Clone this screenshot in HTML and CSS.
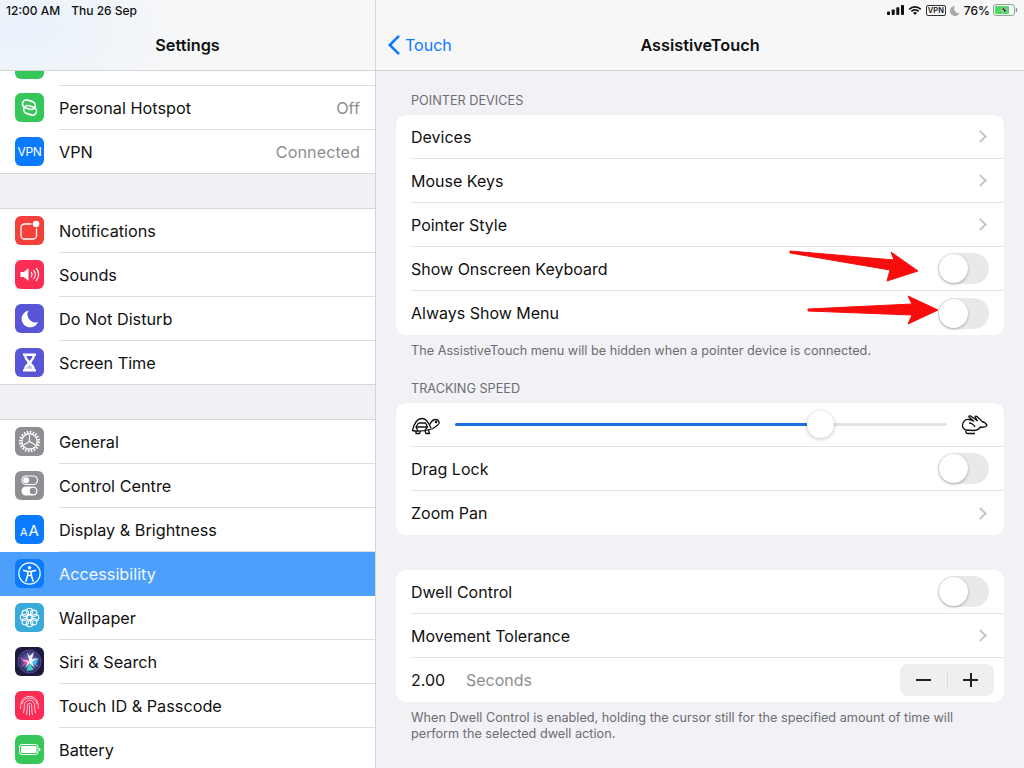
FILE: index.html
```html
<!DOCTYPE html>
<html lang="en">
<head>
    <meta charset="UTF-8">
    <meta name="viewport" content="width=device-width, initial-scale=1.0">
    <title>AssistiveTouch</title>
    <link rel="stylesheet" href="styles.css">
</head>
<body>
    <div class="sidebar">
        <div class="header header-left">
            <div class="status"><span>12:00 AM</span><span class="status-date">Thu 26 Sep</span></div>
            <div class="nav"><span class="nav-title">Settings</span></div>
        </div>
        <div class="group group-cut">
            <div class="row row-cut">
                <span class="icon green icon-cut"></span>
            </div>
            <div class="row">
                <span class="icon green">
                    <svg viewBox="0 0 29 29" fill="none" stroke="#fff" stroke-width="1.700"><rect x="6.500" y="8" width="13" height="8" rx="4" transform="rotate(18 14.500 14.500)"/><rect x="9.500" y="13" width="13" height="8" rx="4" transform="rotate(18 14.500 14.500)"/></svg>
                </span>
                <span class="row-text">Personal Hotspot</span><span class="row-value">Off</span>
            </div>
            <div class="row row-last">
                <span class="icon blue icon-vpn">VPN</span>
                <span class="row-text">VPN</span><span class="row-value">Connected</span>
            </div>
        </div>
        <div class="group group-gap">
            <div class="row">
                <span class="icon red">
                    <svg viewBox="0 0 29 29" fill="none"><rect x="6" y="8" width="15.500" height="15" rx="3.500" stroke="#fff" stroke-width="1.300"/><circle cx="21" cy="8" r="4.600" fill="#f4403a"/><circle cx="21" cy="8" r="3.300" fill="#fff"/></svg>
                </span>
                <span class="row-text">Notifications</span>
            </div>
            <div class="row">
                <span class="icon pink">
                    <svg viewBox="0 0 29 29" fill="none" stroke="#fff"><path d="M5.500 12h3.200l4.800-3.800v12.600L8.700 17H5.500z" fill="#fff" stroke="none"/><path d="M16 12a3.500 3.500 0 0 1 0 5M18.500 10a6.500 6.500 0 0 1 0 9M21 8a9.500 9.500 0 0 1 0 13" stroke-width="1.100"/></svg>
                </span>
                <span class="row-text">Sounds</span>
            </div>
            <div class="row">
                <span class="icon indigo">
                    <svg viewBox="0 0 29 29"><path d="M13.500 6.500a8.500 8.500 0 1 0 9.500 11.500 8 8 0 0 1-9.500-11.500z" fill="#fff"/></svg>
                </span>
                <span class="row-text">Do Not Disturb</span>
            </div>
            <div class="row row-last">
                <span class="icon indigo">
                    <svg viewBox="0 0 29 29" fill="#fff"><path d="M8 5.500h13v2.200h-1.200c0 4-3 5-3.300 6.800.3 1.800 3.300 2.800 3.300 6.800H21v2.200H8v-2.200h1.200c0-4 3-5 3.300-6.800-.3-1.800-3.300-2.800-3.300-6.800H8z"/><path d="M11.500 8h6c0 2.300-2.200 3.600-3 5-.8-1.400-3-2.700-3-5z" fill="#5856d6"/><path d="M14.500 16.500c.8 1.400 3 2.200 3 4.300h-6c0-2.100 2.200-2.900 3-4.300z" fill="#5856d6" opacity=".35"/></svg>
                </span>
                <span class="row-text">Screen Time</span>
            </div>
        </div>
        <div class="group group-gap">
            <div class="row">
                <span class="icon gray">
                    <svg viewBox="0 0 29 29" fill="none" stroke="#fff"><circle cx="14.500" cy="14.500" r="9.200" stroke-width="3" stroke-dasharray="1.500 1.390"/><circle cx="14.500" cy="14.500" r="7.600" stroke-width="1.200"/><path d="M14.500 14.500V8M14.500 14.500l5.600 3.300M14.500 14.500l-5.600 3.300" stroke-width="1.100"/></svg>
                </span>
                <span class="row-text">General</span>
            </div>
            <div class="row">
                <span class="icon gray">
                    <svg viewBox="0 0 29 29"><rect x="7" y="5" width="15.500" height="8.500" rx="4.250" fill="none" stroke="#fff" stroke-width="1.200"/><circle cx="11.200" cy="9.250" r="3" fill="#fff"/><rect x="6.500" y="15.500" width="16" height="9" rx="4.500" fill="#fff"/><circle cx="18" cy="20" r="3.200" fill="#8e8e93"/></svg>
                </span>
                <span class="row-text">Control Centre</span>
            </div>
            <div class="row">
                <span class="icon blue icon-aa"><small>A</small>A</span>
                <span class="row-text">Display &amp; Brightness</span>
            </div>
            <div class="row row-selected">
                <span class="icon blue">
                    <svg viewBox="0 0 29 29" fill="none" stroke="#fff"><circle cx="14.500" cy="14.500" r="10.700" stroke-width="1.200"/><circle cx="14.500" cy="8.800" r="1.700" fill="#fff" stroke="none"/><path d="M8.500 11.500l4.200 1v3.500l-1.700 6M20.500 11.500l-4.200 1v3.500l1.700 6M12.700 12.500h3.600M12.800 16.500h3.400" stroke-width="1.600" stroke-linecap="round"/></svg>
                </span>
                <span class="row-text">Accessibility</span>
            </div>
            <div class="row">
                <span class="icon teal">
                    <svg viewBox="0 0 29 29" fill="none" stroke="#fff" stroke-width="1.100"><circle cx="14.500" cy="14.500" r="2.600"/><circle cx="14.500" cy="8.500" r="3.200"/><circle cx="14.500" cy="20.500" r="3.200"/><circle cx="8.500" cy="14.500" r="3.200"/><circle cx="20.500" cy="14.500" r="3.200"/><circle cx="10.300" cy="10.300" r="3.200"/><circle cx="18.700" cy="10.300" r="3.200"/><circle cx="10.300" cy="18.700" r="3.200"/><circle cx="18.700" cy="18.700" r="3.200"/></svg>
                </span>
                <span class="row-text">Wallpaper</span>
            </div>
            <div class="row">
                <span class="icon siri">
                    <svg viewBox="0 0 29 29">
                        <defs>
                            <radialGradient id="siriGlow">
                                <stop offset="0" stop-color="#b06ac0"/>
                                <stop offset="0.700" stop-color="#3d4a8e"/>
                                <stop offset="1" stop-color="#23264f"/>
                            </radialGradient>
                        </defs>
                        <circle cx="14.500" cy="14.500" r="11.500" fill="url(#siriGlow)" stroke="#7a4fa6" stroke-width=".8"/>
                        <path d="M14.500 15L5 10l4 6-3 4z" fill="#e0479e"/>
                        <path d="M14.500 15L24 11l-3 6 3 3z" fill="#44b8e8"/>
                        <path d="M14.500 15l4 8-7 1z" fill="#3fd0c0"/>
                        <path d="M14.500 15L12 5l2.500 4L19 5l-2 7 6-1-6 4 3 6-5.500-5-4 5 2-6-6-2 6 .5z" fill="#fff" opacity=".9"/>
                    </svg>
                </span>
                <span class="row-text">Siri &amp; Search</span>
            </div>
            <div class="row">
                <span class="icon pink">
                    <svg viewBox="0 0 29 29" fill="none" stroke="#fff" stroke-width=".9" stroke-opacity=".85"><path d="M7 13a7.700 7.700 0 0 1 15 0M5.500 18c.2-1 .3-3 .3-4a8.700 8.700 0 0 1 17.400 0c0 1.500.1 3 .3 4"/><path d="M8.500 22c.5-2 .8-5 .8-7.500a5.200 5.200 0 0 1 10.400 0c0 3 .2 5 .8 7.500"/><path d="M11.500 24c.5-3 .8-6 .8-9.500a2.200 2.200 0 0 1 4.400 0c0 4 .2 7 .8 9.500"/><path d="M14.500 14v11"/></svg>
                </span>
                <span class="row-text">Touch ID &amp; Passcode</span>
            </div>
            <div class="row">
                <span class="icon green">
                    <svg viewBox="0 0 29 29"><rect x="4.500" y="9.500" width="18.500" height="10" rx="2.500" fill="none" stroke="#fff" stroke-width="1"/><rect x="6" y="11" width="15.500" height="7" rx="1.300" fill="#fff"/><rect x="24" y="13" width="1.300" height="3" rx=".6" fill="#fff"/></svg>
                </span>
                <span class="row-text">Battery</span>
            </div>
        </div>
    </div>

    <div class="detail">
        <div class="header">
            <div class="status status-right">
                <svg width="17" height="10" viewBox="0 0 17 10" fill="#111"><rect x="0" y="6.500" width="3" height="3.500" rx=".7"/><rect x="4.700" y="4.500" width="3" height="5.500" rx=".7"/><rect x="9.300" y="2.300" width="3" height="7.700" rx=".7"/><rect x="14" y="0" width="3" height="10" rx=".7"/></svg>
                <svg width="14" height="11" viewBox="0 0 16 12" fill="#111"><path d="M8 2.800a8 8 0 0 1 5.900 2.500l1.300-1.400A10 10 0 0 0 8 .8a10 10 0 0 0-7.200 3.100l1.300 1.400A8 8 0 0 1 8 2.800z"/><path d="M8 6.200a4.800 4.800 0 0 1 3.500 1.500l1.300-1.400A6.700 6.700 0 0 0 8 4.300a6.700 6.700 0 0 0-4.800 2l1.300 1.400A4.800 4.800 0 0 1 8 6.200z"/><path d="M8 7.700a3.200 3.200 0 0 0-2.300 1l2.300 2.500 2.300-2.500a3.200 3.200 0 0 0-2.300-1z"/></svg>
                <span class="vpn-badge">VPN</span>
                <svg width="10" height="11" viewBox="0 0 11 12"><path d="M5.500 1a5.500 5.500 0 1 0 5 7.800A5 5 0 0 1 5.500 1z" fill="#a9a9ad"/></svg>
                <span class="battery-pct">76%</span>
                <svg width="25" height="12" viewBox="0 0 25 12"><rect x=".5" y=".5" width="21" height="11" rx="2.500" fill="none" stroke="#8fa88f"/><rect x="2" y="2" width="14" height="8" rx="1.200" fill="#4cd964"/><path d="M12.500 1l-4.300 5.600h2.800L10 11l4.300-5.700h-2.800z" fill="#111" stroke="#fff" stroke-width=".6"/><rect x="22.800" y="4" width="1.400" height="4" rx=".7" fill="#8a8a8e"/></svg>
            </div>
            <div class="nav">
                <span class="back">
                    <svg width="14" height="22" viewBox="0 0 14 22" fill="none" stroke="#0a7aff" stroke-width="2.600"><path d="M12 1.800L2.800 11l9.200 9.200"/></svg>
                    Touch
                </span>
                <span class="nav-title">AssistiveTouch</span>
            </div>
        </div>

        <div class="content">
            <div class="section-label">POINTER DEVICES</div>
            <div class="card">
                <div class="card-row"><span class="card-text">Devices</span><span class="chevron"></span></div>
                <div class="card-row"><span class="card-text">Mouse Keys</span><span class="chevron"></span></div>
                <div class="card-row"><span class="card-text">Pointer Style</span><span class="chevron"></span></div>
                <div class="card-row"><span class="card-text">Show Onscreen Keyboard</span><span class="toggle"></span></div>
                <div class="card-row"><span class="card-text">Always Show Menu</span><span class="toggle"></span></div>
            </div>
            <div class="footnote">The AssistiveTouch menu will be hidden when a pointer device is connected.</div>

            <div class="section-label section-second">TRACKING SPEED</div>
            <div class="card">
                <div class="card-row slider-row">
                    <svg class="speed-icon" width="29" height="20" viewBox="0 0 29 20" fill="none" stroke="#111" stroke-width="1.300"><path d="M1.500 15.500C3 9 6 3.500 11 3.500c4 0 7 4.500 9 9.500"/><path d="M1 15.500c6 1 14 .5 21-2"/><path d="M19 9.500c1-2.500 2.500-5 5.500-5 2.500 0 4 2 3.500 4-1 2-4 3.500-6 5"/><path d="M5 16v2.500h3.500l1-2.500M14 16l1 2.500h3.500l-1-3.500"/><path d="M7.500 8h7l2 4-3 4M7.500 8L5 12l2 4M5 12h11.500"/><circle cx="25" cy="7" r=".7" fill="#111"/></svg>
                    <div class="slider-track">
                        <div class="slider-fill"></div>
                        <div class="slider-knob"></div>
                    </div>
                    <svg class="speed-icon" width="28" height="20" viewBox="0 0 28 20" fill="none" stroke="#111" stroke-width="1.300"><path d="M1.500 10C2 6 5 4 8 4.500c2 .2 3.500 1 5 2L8 2c-.5-1 1-1.500 2-.8L16.500 6 14 1.800c0-1 1.500-1 2.300 0L21 6.500c2 .5 4.500 2.500 5 4-1 1.500-4 2-6.500 1.500-1.500 2-3.500 3.500-6.500 3.500L5 15c-2.500-1-3.800-3-3.500-5z"/><path d="M5 15.500c-.5 1.500 0 3 2 3h7"/><path d="M8 8c2 0 5 1.500 6 4"/></svg>
                </div>
                <div class="card-row"><span class="card-text">Drag Lock</span><span class="toggle"></span></div>
                <div class="card-row"><span class="card-text">Zoom Pan</span><span class="chevron"></span></div>
            </div>

            <div class="card card-third">
                <div class="card-row"><span class="card-text">Dwell Control</span><span class="toggle"></span></div>
                <div class="card-row"><span class="card-text">Movement Tolerance</span><span class="chevron"></span></div>
                <div class="card-row">
                    <span class="dwell-value">2.00</span><span class="dwell-unit">Seconds</span>
                    <div class="stepper">
                        <span class="step step-minus"></span>
                        <span class="step step-plus"></span>
                    </div>
                </div>
            </div>
            <div class="footnote">When Dwell Control is enabled, holding the cursor still for the specified amount of time will<br>perform the selected dwell action.</div>
        </div>
    </div>

    <!-- red annotation arrows drawn on top of the screenshot -->
    <svg class="arrows" width="1024" height="768" viewBox="0 0 1024 768" fill="#f80d0d" stroke="#f80d0d" stroke-linejoin="round">
        <path d="M790 251l104 9-3-8 27 19-31 10 3-11-100-17z"/>
        <path d="M808 309l104-5-4-8 30 14-30 14 4-9-104-4z"/>
    </svg>
</body>
</html>
```

FILE: styles.css
```css
* {
    box-sizing: border-box;
}
body {
    font-family: 'Inter', 'Liberation Sans', sans-serif;
    margin: 0;
    width: 1024px;
    height: 768px;
    overflow: hidden;
    display: flex;
    background-color: #f1f1f6;
    color: #111;
}
.sidebar {
    width: 376px;
    height: 768px;
    flex-shrink: 0;
    overflow: hidden;
    background-color: #f0f0f5;
    border-right: 1px solid #d5d5d8;
}
.detail {
    flex: 1;
    height: 768px;
    overflow: hidden;
}
.header {
    height: 71px;
    background-color: #f7f7f8;
    border-bottom: 1px solid #d3d3d6;
}
.header-left {
    background: radial-gradient(ellipse 170px 90px at 20px 30px, #e8f2fb, #f7f7f8);
}
.status {
    height: 20px;
    padding-left: 6px;
    font-size: 12px;
    font-weight: 500;
    display: flex;
    align-items: center;
}
.status-date {
    margin-left: 11px;
}
.status-right {
    justify-content: flex-end;
    gap: 4px;
    padding: 0 6px 0 0;
}
.vpn-badge {
    width: 20px;
    font-size: 7.500px;
    font-weight: 600;
    text-align: center;
    border: 1px solid #333;
    border-radius: 2px;
    line-height: 9px;
}
.battery-pct {
    font-size: 12px;
    font-weight: 500;
    margin-right: -1px;
}
.nav {
    position: relative;
    height: 50px;
    display: flex;
    align-items: center;
    justify-content: center;
}
.nav-title {
    font-size: 16.300px;
    font-weight: 600;
}
.back {
    position: absolute;
    left: 11px;
    top: 14px;
    display: flex;
    align-items: center;
    gap: 4px;
    font-size: 16px;
    color: #0a7aff;
}
.group {
    background-color: #fff;
    border-bottom: 1px solid #d8d8dc;
}
.group-gap {
    margin-top: 34px;
    border-top: 1px solid #d8d8dc;
}
.row {
    position: relative;
    height: 44px;
    display: flex;
    align-items: center;
    padding: 0 15px 1px;
    font-size: 16.250px;
}
.row::after {
    content: "";
    position: absolute;
    left: 59px;
    right: 0;
    bottom: 0;
    height: 1px;
    background-color: #dededf;
}
.row-last {
    height: 43px;
    padding-bottom: 0;
}
.row-last::after,
.row-selected::after {
    display: none;
}
.row-cut {
    height: 15px;
    overflow: hidden;
    align-items: flex-start;
}
.row-selected {
    background-color: #4c9ffb;
    color: #f3f8ff;
}
.row-text {
    margin-left: 15px;
}
.row-value {
    margin-left: auto;
    color: #8e8e93;
}
.icon {
    width: 29px;
    height: 29px;
    flex-shrink: 0;
    border-radius: 6px;
    display: flex;
    align-items: center;
    justify-content: center;
    color: #fff;
}
.icon svg {
    width: 29px;
    height: 29px;
    display: block;
}
.icon-cut {
    height: 8px;
    border-radius: 0 0 6px 6px;
}
.icon-vpn {
    font-size: 12px;
    letter-spacing: -0.300px;
}
.icon-aa {
    font-size: 15px;
    align-items: baseline;
    padding-top: 6px;
}
.icon-aa small {
    font-size: 11px;
    margin-right: 1px;
}
.green { background-color: #35c759; }
.blue { background-color: #0a7aff; }
.red { background-color: #f4403a; }
.pink { background-color: #fb2d55; }
.indigo { background-color: #5856d6; }
.gray { background-color: #8e8e93; }
.teal { background-color: #39aada; }
.siri { background-color: #1b1b3f; }
.content {
    padding: 22px 20px 0;
}
.section-label {
    padding-left: 15px;
    font-size: 12.700px;
    line-height: 16px;
    margin-bottom: 6px;
    color: #6d6d72;
}
.section-second {
    margin-top: 22px;
}
.card {
    background-color: #fff;
    border-radius: 10px;
    overflow: hidden;
}
.card-third {
    margin-top: 35px;
}
.card-row {
    height: 44px;
    margin-left: 15px;
    padding-right: 15px;
    display: flex;
    align-items: center;
    justify-content: space-between;
    font-size: 16px;
    border-bottom: 1px solid #e4e4e6;
}
.card-row:last-child {
    border-bottom: none;
}
.chevron {
    width: 9px;
    height: 9px;
    margin-right: 4px;
    border-top: 2px solid #c5c5c8;
    border-right: 2px solid #c5c5c8;
    transform: rotate(45deg);
}
.toggle {
    position: relative;
    width: 51px;
    height: 31px;
    border-radius: 16px;
    background-color: #e9e9ea;
}
.toggle::after {
    content: "";
    position: absolute;
    left: 1px;
    top: 1px;
    width: 29px;
    height: 29px;
    border-radius: 50%;
    background-color: #fff;
    box-shadow: 0 1px 3px rgba(0, 0, 0, 0.3);
}
.footnote {
    margin-top: 8px;
    padding-left: 15px;
    font-size: 12.700px;
    line-height: 16px;
    color: #6d6d72;
}
.slider-row {
    justify-content: flex-start;
}
.speed-icon {
    flex-shrink: 0;
}
.slider-track {
    position: relative;
    width: 492px;
    height: 3px;
    margin: 0 14px 0 15px;
    background-color: #e3e3e5;
    border-radius: 2px;
}
.slider-fill {
    width: 365px;
    height: 3px;
    background-color: #1c6fdc;
    border-radius: 2px;
}
.slider-knob {
    position: absolute;
    left: 352px;
    top: -12px;
    width: 27px;
    height: 27px;
    border-radius: 50%;
    background-color: #fff;
    box-shadow: 0 1px 4px rgba(0, 0, 0, 0.25);
}
.dwell-value {
    width: 55px;
}
.dwell-unit {
    color: #8e8e93;
    margin-right: auto;
}
.stepper {
    width: 94px;
    height: 32px;
    margin-right: -5px;
    display: flex;
    align-items: center;
    background-color: #efeff0;
    border-radius: 8px;
}
.step {
    position: relative;
    flex: 1;
    height: 18px;
}
.step-minus {
    border-right: 1px solid #dcdcde;
}
.step-minus::before,
.step-plus::before {
    content: "";
    position: absolute;
    left: 16px;
    top: 8px;
    width: 15px;
    height: 2px;
    background-color: #222;
}
.step-plus::before {
    left: 15px;
}
.step-plus::after {
    content: "";
    position: absolute;
    left: 22px;
    top: 2px;
    width: 2px;
    height: 14px;
    background-color: #222;
}
.arrows {
    position: absolute;
    left: 0;
    top: 0;
}
```
